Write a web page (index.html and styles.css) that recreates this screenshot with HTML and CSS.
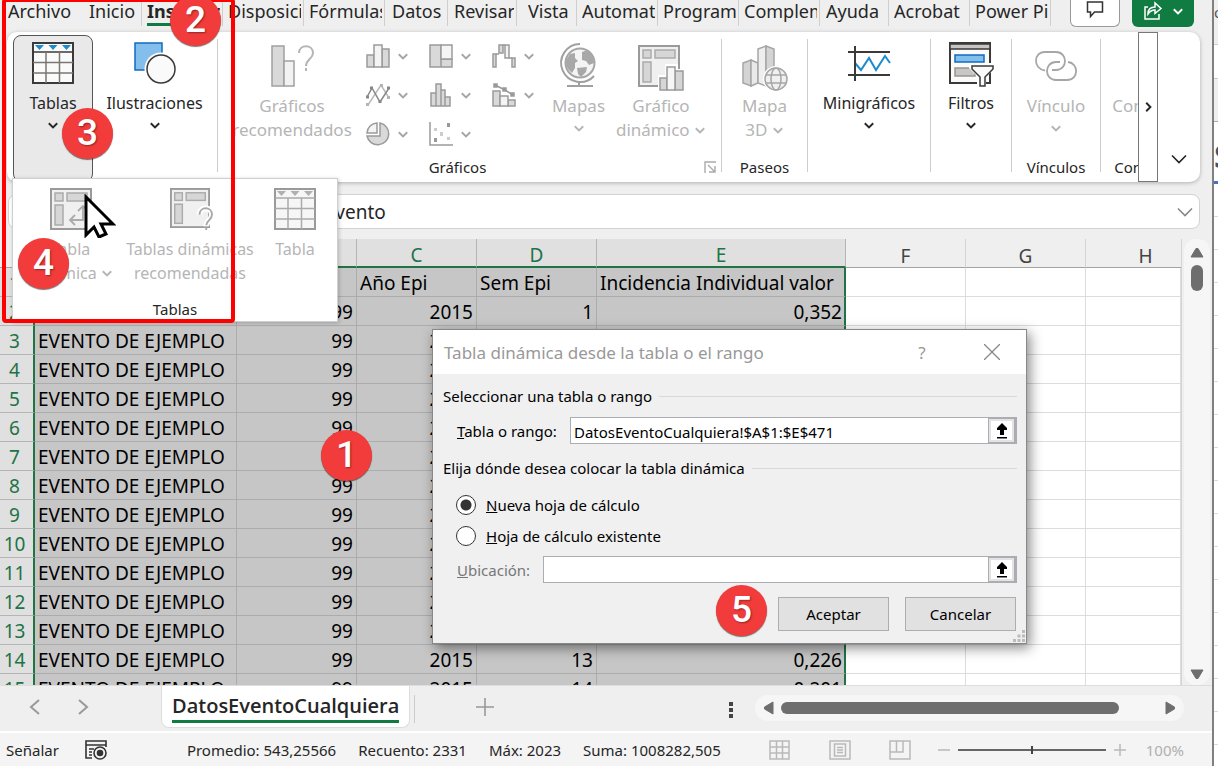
FILE: index.html
```html
<!DOCTYPE html>
<html lang="es">
<head>
<meta charset="utf-8">
<title>DatosEventoCualquiera</title>
<link rel="stylesheet" href="styles.css">
</head>
<body>
<svg class="defs" aria-hidden="true">
  <symbol id="chev" viewBox="0 0 10 10"><path d="M1.500 3.500L5 7l3.500-3.500" fill="none" stroke="currentColor" stroke-width="1.600"/></symbol>
  <symbol id="pivot" viewBox="0 0 42 42"><rect x="1" y="1" width="40" height="40" fill="#f0f0f0" stroke="#9a9a9a" stroke-width="2"/><g fill="#d6d6d6" stroke="#ababab" stroke-width="1.5"><rect x="5" y="5" width="8" height="8"/><rect x="17" y="5" width="20" height="8"/><rect x="5" y="17" width="8" height="20"/></g></symbol>
</svg>

<div class="desktop">
<div class="app">
  <header class="tabs">
    <nav class="tablist">
      <button class="tab w-file"><span>Archivo</span></button>
      <button class="tab w-home"><span>Inicio</span></button>
      <button class="tab w-l active"><span>Insertar</span></button>
      <button class="tab w-l"><span>Disposición</span></button>
      <button class="tab w-l"><span>Fórmulas</span></button>
      <button class="tab w-s"><span>Datos</span></button>
      <button class="tab w-m"><span>Revisar</span></button>
      <button class="tab w-v"><span>Vista</span></button>
      <button class="tab w-l"><span>Automatizar</span></button>
      <button class="tab w-l"><span>Programador</span></button>
      <button class="tab w-l"><span>Complementos</span></button>
      <button class="tab w-m"><span>Ayuda</span></button>
      <button class="tab w-l"><span>Acrobat</span></button>
      <button class="tab w-l"><span>Power Pivot</span></button>
    </nav>
    <div class="tab-actions">
      <button class="comment" aria-label="Comentarios"><svg width="18" height="20" viewBox="0 0 18 20"><path d="M1.500 1h15v10h-8l-4 4.500v-4.500h-3z" fill="none" stroke="#333" stroke-width="1.500"/></svg></button>
      <button class="share" aria-label="Compartir"><svg width="20" height="20" viewBox="0 0 20 20" fill="none" stroke="#fff" stroke-width="1.500"><path d="M5 6H2v12h14v-5"/><path d="M5 13c0-5 3-7 7-7V2l6 5.500-6 5V9c-3 0-5 1-7 4z"/></svg><svg width="12" height="12"><use href="#chev"/></svg></button>
    </div>
  </header>

  <section class="ribbon">
    <div class="groups">
      <div class="group g-tablas">
        <button class="big open">
          <svg width="44" height="42" viewBox="0 0 44 42"><rect x="2" y="1" width="40" height="40" fill="#fafafa" stroke="#3b3a39" stroke-width="2"/><path d="M2 10h40" stroke="#3b3a39" stroke-width="1.500"/><path d="M2 20.500h40M2 31h40M15 10v31M28.500 10v31" stroke="#797774" stroke-width="1.500"/><path d="M4 3h9l-4.500 5zM17.500 3h9L22 8zM31 3h9l-4.500 5z" fill="#1e8bcd"/></svg>
          <span>Tablas</span><svg class="chev" width="12" height="12"><use href="#chev"/></svg>
        </button>
      </div>
      <div class="group g-ilus">
        <button class="big">
          <svg width="44" height="42" viewBox="0 0 44 42"><rect x="2" y="1" width="27" height="27" fill="#83beec" stroke="#0f6cbd" stroke-width="1.500"/><circle cx="28" cy="27" r="16.500" fill="#fff"/><circle cx="28" cy="27" r="14" fill="#fafafa" stroke="#3b3a39" stroke-width="1.500"/></svg>
          <span>Ilustraciones</span><svg class="chev" width="12" height="12"><use href="#chev"/></svg>
        </button>
      </div>
      <i class="sep"></i>
      <div class="group g-graf">
        <div class="group-body">
          <button class="big dis w-rec" disabled>
            <svg width="44" height="42" viewBox="0 0 44 42"><rect x="2" y="1" width="12" height="40" fill="#d9d9d9" stroke="#a0a0a0" stroke-width="1.500"/><rect x="14" y="16" width="10" height="25" fill="#f2f2f2" stroke="#a0a0a0" stroke-width="1.500"/><path d="M29 8c0-9 14-9 14 0 0 6-7 6-7 13M36 23v3" fill="none" stroke="#b4b4b4" stroke-width="2"/></svg>
            <span>Gráficos<br>recomendados</span>
          </button>
          <div class="charts">
            <button class="mini" disabled aria-label="Columnas"><svg width="24" height="24" viewBox="0 0 24 24" stroke="#9a9a9a" stroke-width="1.500" fill="#d9d9d9"><path d="M1 11h7v12H1zM16 5h7v18h-7z"/><path d="M8 1h8v22H8z" fill="#f4f4f4"/></svg><svg width="12" height="12"><use href="#chev"/></svg></button>
            <button class="mini" disabled aria-label="Jerarquía"><svg width="24" height="24" viewBox="0 0 24 24" stroke="#9a9a9a" stroke-width="1.500" fill="#d9d9d9"><path d="M1 1h11v22H1zM12 15h11v8H12z"/><path d="M12 1h11v14H12z" fill="#f4f4f4"/></svg><svg width="12" height="12"><use href="#chev"/></svg></button>
            <button class="mini" disabled aria-label="Cascada"><svg width="24" height="24" viewBox="0 0 24 24" stroke="#9a9a9a" stroke-width="1.500" fill="#d9d9d9"><path d="M1 10h3v13H1zM7 1h4v8H7zM20 14h3v9h-3z"/><path d="M4 10h3M11 1h2M17 14h3"/><path d="M13 1h4v13h-4z" fill="#f4f4f4"/></svg><svg width="12" height="12"><use href="#chev"/></svg></button>
            <button class="mini" disabled aria-label="Líneas"><svg width="24" height="24" viewBox="0 0 24 24" fill="none" stroke-width="1.500"><path d="M2 22L15 2l8 13" stroke="#bbb"/><path d="M1 14L6 5l8 14 9-14" stroke="#888"/><path d="M0 12.500h3v3H0zM4 3.500h3v3H4zM12.500 17h3v3h-3zM21 3.500h3v3h-3z" fill="#888"/><path d="M0 20h3v3H0zM14 1h3v3h-3zM21 13h3v3h-3z" fill="#b4b4b4"/></svg><svg width="12" height="12"><use href="#chev"/></svg></button>
            <button class="mini" disabled aria-label="Histograma"><svg width="24" height="24" viewBox="0 0 24 24" stroke="#9a9a9a" stroke-width="1.500" fill="#d9d9d9"><path d="M2 10h5v13H2zM7 1h5v22H7zM12 7h4v16h-4zM16 14h5v9h-5z"/></svg><svg width="12" height="12"><use href="#chev"/></svg></button>
            <button class="mini" disabled aria-label="Combinado"><svg width="24" height="24" viewBox="0 0 24 24" stroke="#9a9a9a" stroke-width="1.500" fill="#d9d9d9"><path d="M1 8h7v15H1zM16 17h7v6h-7z"/><path d="M8 13h8v10H8z" fill="#f4f4f4"/><path d="M3 2l10 5 8 5" fill="none"/><path d="M2 1h3v3H2zM11 5h3v3h-3zM19 10h3v3h-3z" fill="#9a9a9a"/></svg><svg width="12" height="12"><use href="#chev"/></svg></button>
            <button class="mini" disabled aria-label="Circular"><svg width="24" height="24" viewBox="0 0 24 24" stroke="#9a9a9a" stroke-width="1.500"><path d="M14 1a11 11 0 1 1-13 13h13z" fill="#d9d9d9"/><path d="M11 1v10H1A10.500 10.500 0 0 1 11 1z" fill="#f4f4f4"/></svg><svg width="12" height="12"><use href="#chev"/></svg></button>
            <button class="mini" disabled aria-label="Dispersión"><svg width="24" height="24" viewBox="0 0 24 24"><path d="M1 0v23h23" fill="none" stroke="#9a9a9a" stroke-width="1.500"/><path d="M18 1h3v4h-3zM5 16h3v4H5z" fill="#999"/><path d="M5 6h3v3H5zM11 10h3v4h-3zM18 15h3v3h-3z" fill="#ccc"/></svg><svg width="12" height="12"><use href="#chev"/></svg></button>
          </div>
          <button class="big dis w-maps" disabled>
            <svg width="44" height="42" viewBox="0 0 44 42"><circle cx="23" cy="18" r="14.500" fill="#f4f4f4" stroke="#a6a6a6" stroke-width="2"/><path d="M9 15l4-6 5-1v5l3 3-3 2v5l-3 5-4-4-2-4zM25 7l6-2 5 7 1 6-5 2-3-4-4-1zM20 23l10-1-1 5-5 5-3-3z" fill="#a8a8a8"/><path d="M23-1A19 19 0 1 0 37 31M22 37v4M10 41h26" fill="none" stroke="#a0a0a0" stroke-width="2"/></svg>
            <span>Mapas</span><svg class="chev" width="12" height="12"><use href="#chev"/></svg>
          </button>
          <button class="big dis w-pivot" disabled>
            <svg width="46" height="42" viewBox="0 0 46 42"><use href="#pivot" width="42" height="42"/><path d="M20 46V30h7V19h13v5h6v22z" fill="#fff"/><g stroke="#9a9a9a" stroke-width="1.500"><path d="M22 33h7v12h-7zM37 26h8v19h-8z" fill="#d6d6d6"/><path d="M29 22h8v23h-8z" fill="#f6f6f6"/></g></svg>
            <span>Gráfico<br>dinámico <svg width="12" height="12"><use href="#chev"/></svg></span>
          </button>
        </div>
        <div class="group-name">Gráficos<button class="launcher" aria-label="Ver todos los gráficos"><svg width="12" height="12" viewBox="0 0 12 12" fill="none" stroke="#aaa" stroke-width="1.400"><path d="M1 12V1h11M4 4l7 7M11 5v6H5"/></svg></button></div>
      </div>
      <i class="sep"></i>
      <div class="group g-paseos">
        <button class="big dis" disabled>
          <svg width="46" height="42" viewBox="0 0 46 42"><g stroke="#a6a6a6" stroke-width="1.500"><path d="M1 18l8-3v26l-8-3z" fill="#d4d4d4"/><path d="M9 15l7 3v20l-7 3z" fill="#e9e9e9"/><path d="M16 4l8-3v40l-8-3z" fill="#eee"/><path d="M24 1l8 3v34l-8 3z" fill="#d4d4d4"/></g><circle cx="34" cy="34" r="13" fill="#fff"/><g fill="#f0f0f0" stroke="#a6a6a6" stroke-width="1.500"><circle cx="34" cy="34" r="11"/><ellipse cx="34" cy="34" rx="5" ry="11"/><path d="M24 30h20M24 38h20"/></g></svg>
          <span>Mapa<br>3D <svg width="12" height="12"><use href="#chev"/></svg></span>
        </button>
        <div class="group-name">Paseos</div>
      </div>
      <i class="sep"></i>
      <div class="group g-mini">
        <button class="big">
          <svg width="44" height="42" viewBox="0 0 44 42"><path d="M8 21l6 7 8-12 7 12 9-14 5 7" fill="none" stroke="#1e8bcd" stroke-width="2"/><path d="M1 10h42M1 33h42M8 4v35" stroke="#3b3a39" stroke-width="2"/></svg>
          <span>Minigráficos</span><svg class="chev" width="12" height="12"><use href="#chev"/></svg>
        </button>
      </div>
      <i class="sep"></i>
      <div class="group g-filt">
        <button class="big">
          <svg width="46" height="42" viewBox="0 0 46 42"><rect x="2" y="1" width="40" height="40" fill="#fafafa" stroke="#3b3a39" stroke-width="2"/><path d="M2 2h40v5H2z" fill="#c8c6c4" stroke="#3b3a39" stroke-width="1.500"/><rect x="7" y="13" width="29" height="7" fill="#83beec" stroke="#0f6cbd" stroke-width="1.500"/><rect x="7" y="26" width="20" height="8" fill="#c8c6c4" stroke="#979593" stroke-width="1.500"/><path d="M21 21h25v6l-8 8v10H29V34l-8-8z" fill="#fff"/><path d="M24 24h21v3l-8 8v9h-5v-9l-8-8z" fill="#fafafa" stroke="#3b3a39" stroke-width="1.500"/></svg>
          <span>Filtros</span><svg class="chev" width="12" height="12"><use href="#chev"/></svg>
        </button>
      </div>
      <i class="sep"></i>
      <div class="group g-vinc">
        <button class="big dis" disabled>
          <svg width="44" height="42" viewBox="0 0 44 42" fill="none" stroke="#a6a6a6" stroke-width="1.800"><path d="M11 25.500C-1 24-1 7 11 7h11c12 0 12 18 0 18h-4"/><path d="M26 17h-4c-12 0-12 18 0 18h11c12 0 12-17 1-18"/></svg>
          <span>Vínculo</span><svg class="chev" width="12" height="12"><use href="#chev"/></svg>
        </button>
        <div class="group-name">Vínculos</div>
      </div>
      <i class="sep"></i>
      <div class="group g-com">
        <button class="big dis" disabled><i class="blank"></i><span>Comentario</span></button>
        <div class="group-name">Comentarios</div>
      </div>
    </div>
    <button class="scroll-right" aria-label="Más comandos"><svg width="12" height="12"><use href="#chev" transform="rotate(-90 6 6)"/></svg></button>
    <button class="collapse" aria-label="Contraer la cinta"><svg width="16" height="16" viewBox="0 0 16 16"><path d="M1 4.500l7 7 7-7" fill="none" stroke="#222" stroke-width="1.600"/></svg></button>
  </section>

  <div class="formula">
    <input type="text" value="evento" aria-label="Barra de fórmulas">
    <svg width="16" height="16" viewBox="0 0 16 16"><path d="M1 4.500l7 7 7-7" fill="none" stroke="#888" stroke-width="1.600"/></svg>
  </div>

  <main class="sheet">
    <div class="grid-view">
      <table class="grid">
        <colgroup><col class="c-row"><col class="c-a"><col class="c-n"><col class="c-n"><col class="c-n"><col class="c-e"><col class="c-n"><col class="c-n"><col></colgroup>
        <thead><tr><th></th><th class="s"></th><th class="s"></th><th class="s">C</th><th class="s">D</th><th class="s">E</th><th>F</th><th>G</th><th class="h">H</th></tr></thead>
        <tbody>
          <tr class="titles"><th>1</th><td></td><td></td><td>Año Epi</td><td>Sem Epi</td><td>Incidencia Individual valor</td><td></td><td></td><td></td></tr>
          <tr><th>2</th><td></td><td>99</td><td>2015</td><td>1</td><td>0,352</td><td></td><td></td><td></td></tr>
          <tr><th>3</th><td>EVENTO DE EJEMPLO</td><td>99</td><td>2015</td><td></td><td></td><td></td><td></td><td></td></tr>
          <tr><th>4</th><td>EVENTO DE EJEMPLO</td><td>99</td><td>2015</td><td></td><td></td><td></td><td></td><td></td></tr>
          <tr><th>5</th><td>EVENTO DE EJEMPLO</td><td>99</td><td>2015</td><td></td><td></td><td></td><td></td><td></td></tr>
          <tr><th>6</th><td>EVENTO DE EJEMPLO</td><td>99</td><td>2015</td><td></td><td></td><td></td><td></td><td></td></tr>
          <tr><th>7</th><td>EVENTO DE EJEMPLO</td><td>99</td><td>2015</td><td></td><td></td><td></td><td></td><td></td></tr>
          <tr><th>8</th><td>EVENTO DE EJEMPLO</td><td>99</td><td>2015</td><td></td><td></td><td></td><td></td><td></td></tr>
          <tr><th>9</th><td>EVENTO DE EJEMPLO</td><td>99</td><td>2015</td><td></td><td></td><td></td><td></td><td></td></tr>
          <tr><th>10</th><td>EVENTO DE EJEMPLO</td><td>99</td><td>2015</td><td></td><td></td><td></td><td></td><td></td></tr>
          <tr><th>11</th><td>EVENTO DE EJEMPLO</td><td>99</td><td>2015</td><td></td><td></td><td></td><td></td><td></td></tr>
          <tr><th>12</th><td>EVENTO DE EJEMPLO</td><td>99</td><td>2015</td><td></td><td></td><td></td><td></td><td></td></tr>
          <tr><th>13</th><td>EVENTO DE EJEMPLO</td><td>99</td><td>2015</td><td></td><td></td><td></td><td></td><td></td></tr>
          <tr><th>14</th><td>EVENTO DE EJEMPLO</td><td>99</td><td>2015</td><td>13</td><td>0,226</td><td></td><td></td><td></td></tr>
          <tr><th>15</th><td>EVENTO DE EJEMPLO</td><td>99</td><td>2015</td><td>14</td><td>0,201</td><td></td><td></td><td></td></tr>
        </tbody>
      </table>
    </div>
    <div class="vscroll">
      <svg width="14" height="11" viewBox="0 0 14 11"><path d="M1 10L6 1.500h2L13 10z" fill="#6e6e6e" stroke="#6e6e6e" stroke-linejoin="round"/></svg>
      <i class="vthumb"></i>
      <svg width="14" height="11" viewBox="0 0 14 11"><path d="M1 1l5 8.500h2L13 1z" fill="#6e6e6e" stroke="#6e6e6e" stroke-linejoin="round"/></svg>
    </div>
  </main>

  <div class="sheetbar">
    <button class="nav" aria-label="Hoja anterior"><svg width="12" height="16" viewBox="0 0 12 16"><path d="M10 1L2 8l8 7" fill="none" stroke="#999" stroke-width="2"/></svg></button>
    <button class="nav" aria-label="Hoja siguiente"><svg width="12" height="16" viewBox="0 0 12 16"><path d="M2 1l8 7-8 7" fill="none" stroke="#999" stroke-width="2"/></svg></button>
    <button class="sheet-tab"><span>DatosEventoCualquiera</span></button>
    <i class="tab-sep"></i>
    <button class="add" aria-label="Hoja nueva"><svg width="18" height="18" viewBox="0 0 18 18"><path d="M9 0v18M0 9h18" stroke="#999" stroke-width="1.600"/></svg></button>
    <svg class="dots" width="4" height="16" viewBox="0 0 4 16"><path d="M0 0h4v4H0zM0 6h4v4H0zM0 12h4v4H0z" fill="#444"/></svg>
    <div class="hscroll">
      <svg width="11" height="14" viewBox="0 0 11 14"><path d="M10 1L1.500 6v2L10 13z" fill="#6e6e6e" stroke="#6e6e6e" stroke-linejoin="round"/></svg>
      <i class="hthumb"></i>
      <svg width="11" height="14" viewBox="0 0 11 14"><path d="M1 1l8.500 5v2L1 13z" fill="#6e6e6e" stroke="#6e6e6e" stroke-linejoin="round"/></svg>
    </div>
  </div>

  <footer class="status">
    <span class="mode">Señalar</span>
    <svg class="macro" width="22" height="20" viewBox="0 0 22 20" fill="none" stroke="#333" stroke-width="1.600"><path d="M7 18H1V1h20v6M1 5h20M4 9h5M4 12h3M4 15h3"/><circle cx="15" cy="13" r="6"/><circle cx="15" cy="13" r="2.500" fill="#333"/></svg>
    <div class="stats"><span>Promedio: 543,25566</span><span>Recuento: 2331</span><span>Máx: 2023</span><span>Suma: 1008282,505</span></div>
    <div class="views">
      <button aria-label="Normal"><svg width="22" height="20" viewBox="0 0 22 20" fill="none" stroke="#b9b9b9" stroke-width="1.500"><path d="M1 1h19v18H1zM7.500 1v18M13.500 1v18M1 7h19M1 13h19"/></svg></button>
      <button aria-label="Diseño de página"><svg width="22" height="20" viewBox="0 0 22 20" fill="none" stroke="#b9b9b9" stroke-width="1.500"><path d="M1 1h20v18H1zM5.500 4h11v12h-11zM8 7.500h6M8 10h6M8 12.500h6"/></svg></button>
      <button aria-label="Vista previa de salto de página"><svg width="22" height="20" viewBox="0 0 22 20" fill="none" stroke="#b9b9b9" stroke-width="1.500"><path d="M1 1h20v18H1zM1 12h13V1M7.500 1v11"/></svg></button>
    </div>
    <div class="zoom">
      <svg width="12" height="12" viewBox="0 0 12 12"><path d="M0 6h12" stroke="#b9b9b9" stroke-width="1.500"/></svg>
      <input type="range" min="0" max="100" value="50" aria-label="Zoom">
      <svg width="12" height="12" viewBox="0 0 12 12"><path d="M0 6h12M6 0v12" stroke="#b9b9b9" stroke-width="1.500"/></svg>
      <span>100%</span>
    </div>
  </footer>
</div>

<aside class="behind"><span class="bo">o</span><span class="bs">S</span></aside>

<div class="menu">
  <div class="menu-row">
    <button class="m1" disabled><svg width="42" height="42" viewBox="0 0 42 42"><use href="#pivot" width="42" height="42"/><path d="M20 32h13V18M25 27l-5 5 5 5M28 23l5-5 5 5" fill="none" stroke="#ababab" stroke-width="1.800"/></svg><span>Tabla<br>dinámica <svg width="12" height="12"><use href="#chev"/></svg></span></button>
    <button class="m2" disabled><svg width="46" height="44" viewBox="-2 0 46 44"><use href="#pivot" width="42" height="42"/><path d="M31 28c0-9 13-9 13 0 0 6-6 6-6 12M38 42v3" fill="none" stroke="#fff" stroke-width="6"/><path d="M31 28c0-9 13-9 13 0 0 6-6 6-6 11M38 41v3" fill="none" stroke="#a8a8a8" stroke-width="2"/></svg><span>Tablas dinámicas<br>recomendadas</span></button>
    <button class="m3" disabled><svg width="42" height="42" viewBox="0 0 42 42"><rect x="1" y="1" width="40" height="40" fill="#f6f6f6" stroke="#9a9a9a" stroke-width="2"/><path d="M1 10h40M1 20.500h40M1 31h40M14 10v31M27.500 10v31" stroke="#ababab" stroke-width="1.500"/><path d="M3 3h9L7.500 8zM16.500 3h9L21 8zM30 3h9l-4.500 5z" fill="#b0b0b0"/></svg><span>Tabla</span></button>
  </div>
  <div class="menu-name">Tablas</div>
</div>

<form class="dialog" onsubmit="return false">
  <div class="dlg-title"><span>Tabla dinámica desde la tabla o el rango</span><button type="button" class="help">?</button><button type="button" class="close" aria-label="Cerrar"><svg width="16" height="16" viewBox="0 0 16 16"><path d="M0 0l16 16M16 0L0 16" stroke="#888" stroke-width="1.300"/></svg></button></div>
  <div class="dlg-body">
    <div class="legend"><span>Seleccionar una tabla o rango</span></div>
    <div class="field f1"><label for="rango"><u>T</u>abla o rango:</label><div class="ref"><input id="rango" type="text" value="DatosEventoCualquiera!$A$1:$E$471"><button type="button" aria-label="Contraer diálogo"><svg width="14" height="16" viewBox="0 0 14 16"><path d="M7 0l5 5v2H9v5H5V7H2V5zM2 14h10v1.500H2z" fill="#000"/></svg></button></div></div>
    <div class="legend"><span>Elija dónde desea colocar la tabla dinámica</span></div>
    <div class="radio r1"><input type="radio" id="nueva" name="dest" checked><label for="nueva"><u>N</u>ueva hoja de cálculo</label></div>
    <div class="radio"><input type="radio" id="exist" name="dest"><label for="exist"><u>H</u>oja de cálculo existente</label></div>
    <div class="field f2"><label for="ubic"><u>U</u>bicación:</label><div class="ref"><input id="ubic" type="text"><button type="button" aria-label="Elegir ubicación"><svg width="14" height="16" viewBox="0 0 14 16"><path d="M7 0l5 5v2H9v5H5V7H2V5zM2 14h10v1.500H2z" fill="#000"/></svg></button></div></div>
    <div class="actions"><button type="submit">Aceptar</button><button type="button">Cancelar</button></div>
  </div>
  <svg class="grip" width="12" height="12" viewBox="0 0 12 12"><path d="M9 0h3v3H9zM9 4.500h3v3H9zM4.500 4.500h3v3h-3zM0 9h3v3H0zM4.500 9h3v3h-3zM9 9h3v3H9z" fill="#bbb"/></svg>
</form>

<div class="frame"></div>
<svg class="cursor" width="32" height="44" viewBox="0 0 32 44"><path d="M2 3v38l8-8 5 10 7-3-5-10h12z" fill="#fff" stroke="#000" stroke-width="3"/></svg>
<div class="badge b1">1</div><div class="badge b2">2</div><div class="badge b3">3</div><div class="badge b4">4</div><div class="badge b5">5</div>
</div>
</body>
</html>
```
FILE: styles.css
```css
* { box-sizing: border-box; }
body { margin: 0; font-family: "Noto Sans", "Open Sans", sans-serif; font-size: 16px; color: #262626; }
button { font: inherit; color: inherit; background: none; border: 0; padding: 0; }
input { font: inherit; color: inherit; }
.defs { position: absolute; width: 0; height: 0; }
.desktop { position: relative; display: flex; height: 100vh; overflow: hidden; background: #fff; }
.app { flex: 1; min-width: 0; display: flex; flex-direction: column; background: #efefef; border-right: 2px solid #808080; }

/* ribbon tabs */
.tabs { display: flex; justify-content: space-between; height: 32px; flex: none; }
.tablist { display: flex; min-width: 0; overflow: hidden; height: 26px; }
.tab { flex: none; padding: 0 2px 0 5px; border-right: 1px solid #cfcfcf; font-size: 18px; line-height: 22px; text-align: left; display: flex; }
.tab span { display: block; flex: 1; overflow: hidden; white-space: nowrap; height: 26px; }
.w-file { width: 82px; padding-left: 8px; border: 0; }
.w-home { width: 60px; padding-left: 7px; }
.w-l { width: 81px; }
.w-s { width: 63px; padding-left: 7px; }
.w-m { width: 69px; padding-left: 6px; }
.w-v { width: 60px; padding-left: 11px; }
.active { font-weight: 700; }
.active span { border-bottom: 3px solid #0f7b41; }
.tab-actions { display: flex; gap: 12px; padding-right: 18px; }
.comment { width: 50px; height: 27px; background: #fff; border: 1px solid #999; border-top: 0; border-radius: 0 0 6px 6px; }
.share { display: flex; align-items: center; justify-content: space-around; padding: 0 6px 6px; width: 62px; height: 27px; background: #107c41; color: #fff; border-radius: 0 0 6px 6px; }

/* ribbon */
.ribbon { flex: none; display: flex; height: 150px; margin: 0 12px 0 7px; background: #fff; border-radius: 10px; box-shadow: 0 1px 4px #0004; }
.groups { flex: 1; min-width: 0; display: flex; overflow: hidden; }
.group { flex: none; display: flex; flex-direction: column; justify-content: space-between; align-items: center; }
.sep { flex: none; width: 1px; margin: 7px 0 10px; background: #cdcdcd; }
.g-tablas { width: 87px; align-items: flex-start; }
.g-ilus { width: 123px; padding-right: 2px; }
.g-graf { width: 503px; align-items: stretch; }
.g-paseos { width: 85px; }
.g-mini { width: 122px; }
.g-filt { width: 80px; }
.g-vinc { width: 88px; }
.g-com { width: 117px; }
.group-body { display: flex; }
.big { display: flex; flex-direction: column; align-items: center; padding-top: 10px; line-height: 24px; white-space: nowrap; }
.big > svg { overflow: visible; flex: none; }
.big > span { margin-top: 7px; }
.big .chev { margin-top: 4px; }
.big.open { width: 80px; height: 148px; margin: 3px 0 0 6px; padding-top: 6px; background: #e9e9e9; border: 1px solid #555; border-radius: 8px; }
.dis { padding-top: 13px; color: #b5b5b5; font-size: 17px; }
.blank { height: 42px; }
.w-rec { width: 148px; }
.w-maps { width: 47px; }
.w-pivot { width: 118px; }
.charts { display: grid; grid-template-columns: repeat(3, 63px); grid-template-rows: 39px 39px 24px; padding-top: 12px; }
.mini { display: flex; gap: 7px; color: #a5a5a5; height: 24px; align-items: center; }
.group-name { position: relative; font-size: 15px; line-height: 20px; margin-bottom: 5px; text-align: center; padding: 0 2px; }
.g-graf .group-name { padding-right: 26px; }
.launcher { position: absolute; right: 5px; top: 4px; display: flex; }
.scroll-right { width: 20px; background: #fff; border: 1px solid #777; }
.collapse { width: 42px; align-self: flex-end; height: 42px; }

/* formula bar */
.formula { flex: none; display: flex; align-items: center; height: 35px; margin: 12px 12px 10px 8px; padding: 0 6px; background: #fff; border: 1px solid #d2d2d2; border-radius: 8px; }
.formula input { flex: 1; min-width: 0; border: 0; background: none; padding: 0 0 0 310px; font-size: 19px; outline: 0; }

/* grid */
.sheet { flex: 1; min-height: 0; display: flex; }
.grid-view { flex: 1; min-width: 0; overflow: hidden; border-right: 1px solid #d5d5d5; background: #fff; }
.grid { table-layout: fixed; width: 100%; border-collapse: separate; border-spacing: 0; font-size: 19px; line-height: 26px; color: #000; }
.c-row { width: 35px; } .c-a { width: 202px; } .c-n { width: 120px; } .c-e { width: 249px; }
.grid th { font-weight: 400; color: #444; background: #efefef; padding: 2px 0 0; height: 29px; }
.grid thead th { line-height: 22px; padding-top: 5px; border-bottom: 1px solid #a3a3a3; border-right: 1px solid #d5d5d5; }
.grid thead th.s { background: #e0e0e0; color: #217346; border-bottom: 2px solid #217346; border-right-color: #b5b5b5; }
.grid thead th.h { padding-left: 24px; border-right: 0; }
.grid tbody th { background: #e0e0e0; color: #217346; border-right: 2px solid #217346; border-bottom: 1px solid #b5b5b5; padding-right: 4px; }
.grid td { height: 29px; padding: 2px 3px 0; border-right: 1px solid #dcdcdc; border-bottom: 1px solid #dcdcdc; white-space: nowrap; text-align: right; }
.grid td:nth-child(-n+6) { background: #c6c6c6; border-color: #acacac; }
.grid td:nth-child(6) { border-right: 2px solid #217346; padding-right: 2px; }
.grid td:nth-child(2), .grid .titles td { text-align: left; }
.vscroll { width: 26px; margin: 0 2px 0 2px; display: flex; flex-direction: column; align-items: center; background: #f6f6f6; border-radius: 12px; padding: 8px 0 5px; }
.vthumb { width: 12px; height: 26px; margin: 7px 0 auto; border-radius: 6px; background: #6e6e6e; }

/* sheet tabs */
.sheetbar { flex: none; display: flex; align-items: flex-start; height: 48px; padding-right: 28px; border-top: 1px solid #ddd; border-bottom: 2px solid #fff; }
.nav { width: 48px; height: 46px; }
.nav:first-child { margin-left: 11px; }
.sheet-tab { margin-left: 54px; height: 42px; padding: 6px 10px 4px; background: #fff; border: 1px solid #ddd; border-top: 0; border-radius: 0 0 8px 8px; font: 600 20px/28px "Open Sans", "Noto Sans", sans-serif; }
.sheet-tab span { display: block; border-bottom: 3px solid #107c41; line-height: 28px; }
.tab-sep { width: 1px; height: 28px; background: #ccc; margin: 9px 0 0 4px; }
.add { width: 60px; height: 46px; margin-left: 40px; }
.dots { margin: 16px 22px 0 auto; }
.hscroll { width: 429px; height: 26px; margin-top: 9px; display: flex; align-items: center; gap: 7px; padding: 0 8px; border-radius: 13px; background: #f6f6f6; }
.hthumb { width: 338px; height: 12px; margin-right: auto; border-radius: 6px; background: #6e6e6e; }

/* status bar */
.status { flex: none; display: flex; align-items: center; height: 33px; padding: 0 28px 0 6px; background: #f4f4f4; font-size: 15px; white-space: nowrap; }
.macro { margin-left: 26px; }
.stats { display: flex; gap: 22px; margin-left: 80px; }
.views { display: flex; gap: 38px; margin-left: auto; }
.views button, .zoom { display: flex; align-items: center; }
.zoom { margin-left: 27px; gap: 8px; color: #b0b0b0; }
.zoom span { margin-left: 12px; }
.zoom input { appearance: none; width: 148px; height: 12px; margin: 0; background: linear-gradient(#666, #666) center / 100% 2px no-repeat; }
.zoom input::-webkit-slider-thumb { appearance: none; width: 2px; height: 8px; background: #444; }

/* window behind */
.behind { flex: none; width: 4px; position: relative; overflow: hidden; background: linear-gradient(#efefef 44px, #ccc 44px 45px, #fff 45px 78px, #ccc 78px 79px, #efefef 79px 121px, #aaa 121px 122px, #fff 122px 181px, #4472c4 181px 184px, #fff0 184px), repeating-linear-gradient(#fff 0 18px, #ddd 18px 19px, #fff 19px 33px); }
.bo, .bs { position: absolute; left: 0; line-height: 24px; color: #555; }
.bo { top: 0; font-size: 15px; }
.bs { top: 144px; font-weight: 700; font-size: 32px; color: #44546a; }

/* Tablas menu */
.menu { position: absolute; left: 12px; top: 178px; width: 326px; background: #fff; border: 1px solid #cfcfcf; box-shadow: 1px 1px 4px #0003; }
.menu-row { display: flex; height: 120px; padding-top: 9px; }
.menu-row button { display: flex; flex-direction: column; align-items: center; color: #b5b5b5; line-height: 24px; white-space: nowrap; }
.menu-row button > svg { overflow: visible; flex: none; height: 42px; }
.menu-row button > span { margin-top: 7px; }
.m1 { width: 111px; padding-left: 4px; }
.m2 { width: 132px; }
.m3 { width: 78px; }
.menu-name { font-size: 15px; line-height: 20px; height: 22px; text-align: center; }

/* dialog */
.dialog { position: absolute; left: 432px; top: 329px; width: 595px; background: #f0f0f0; border: 1px solid #888; box-shadow: 3px 4px 12px #0007; color: #000; font-size: 15px; }
.dlg-title { display: flex; align-items: center; height: 44px; padding: 0 26px 0 11px; background: #fff; color: #999; font-size: 17px; }
.dlg-title span { flex: 1; }
.help { width: 20px; margin-right: 52px; }
.close { display: flex; }
.dlg-body { padding: 12px 9px 12px 10px; line-height: 20px; }
.legend { display: flex; align-items: center; gap: 7px; }
.legend::after { content: ""; flex: 1; height: 1px; background: #d9d9d9; }
.field { display: flex; align-items: center; padding-left: 14px; }
.field label { flex: none; }
.ref { flex: 1; display: flex; height: 27px; border: 1px solid #abadb3; background: #fff; }
.ref input { flex: 1; min-width: 0; border: 0; background: none; padding: 2px 3px 0; outline: 0; }
.ref button { width: 28px; display: flex; align-items: center; justify-content: center; border: 1px solid #abadb3; border-width: 1px 2px 1px 1px; background: #fff; box-shadow: inset 0 0 0 2px #e3e3e3; }
.f1 { margin: 11px 0 14px; }
.f1 label { width: 113px; }
.f2 { margin: 5px 0 14px; }
.f2 label { width: 86px; color: #777; }
.radio { display: flex; align-items: center; gap: 10px; height: 31px; padding-left: 13px; }
.r1 { margin-top: 11px; }
.radio input { appearance: none; width: 20px; height: 20px; margin: 0; border: 1px solid #333; border-radius: 50%; background: #fff; }
.radio input:checked { background: radial-gradient(circle, #333 5px, #fff 6px); }
.radio label { padding-top: 1px; }
.actions { display: flex; justify-content: flex-end; gap: 16px; padding-right: 1px; }
.actions button { width: 111px; height: 34px; background: #e1e1e1; border: 1px solid #adadad; }
.grip { position: absolute; right: 1px; bottom: 1px; }

/* tutorial annotations */
.frame { position: absolute; left: 2px; top: -2px; width: 233px; height: 325px; border: 4px solid #fe0000; border-radius: 4px; }
.cursor { position: absolute; left: 84px; top: 194px; }
.badge { position: absolute; width: 51px; height: 51px; border-radius: 50%; background: #f23c3c; color: #fff; font: 500 37px/50px Roboto, sans-serif; text-align: center; box-shadow: 0 1px 1px #0008; text-shadow: 1px 1px 2px #0006; }
.b1 { left: 321px; top: 430px; }
.b2 { left: 170px; top: -5px; }
.b3 { left: 62px; top: 108px; }
.b4 { left: 18px; top: 238px; }
.b5 { left: 716px; top: 585px; }
```
